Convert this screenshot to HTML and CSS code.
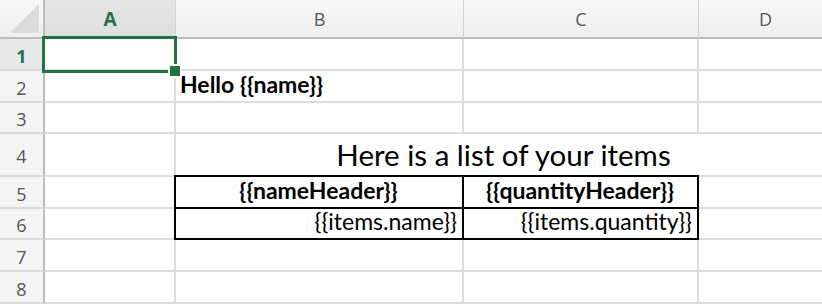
FILE: index.html
```html
<!DOCTYPE html>
<html>
<head>
<meta charset="utf-8">
<link rel="stylesheet" href="styles.css">
</head>
<body>
<div class="sheet">
  <div class="grid">
    <div class="corner"><svg class="corner-tri" width="45" height="39" viewBox="0 0 45 39"><polygon points="10,33 39,4 39,33" fill="#dcdcdc"/></svg></div>
    <div class="colhead selected">A</div>
    <div class="colhead">B</div>
    <div class="colhead">C</div>
    <div class="colhead">D</div>

    <div class="rowhead selected">1</div>
    <div class="cell"></div><div class="cell"></div><div class="cell"></div><div class="cell"></div>

    <div class="rowhead">2</div>
    <div class="cell"></div><div class="cell bold">Hello {{name}}</div><div class="cell"></div><div class="cell"></div>

    <div class="rowhead">3</div>
    <div class="cell"></div><div class="cell"></div><div class="cell"></div><div class="cell"></div>

    <div class="rowhead">4</div>
    <div class="cell"></div>
    <div class="cell title">
      <span>Here is a list of your items</span>
      <span class="table-top"></span>
    </div>

    <div class="rowhead">5</div>
    <div class="cell"></div>
    <div class="cell tb tb-first tb-top bold center">{{nameHeader}}</div>
    <div class="cell tb tb-top bold center">{{quantityHeader}}</div>
    <div class="cell"></div>

    <div class="rowhead">6</div>
    <div class="cell"></div>
    <div class="cell tb tb-first right">{{items.name}}</div>
    <div class="cell tb right">{{items.quantity}}</div>
    <div class="cell"></div>

    <div class="rowhead">7</div>
    <div class="cell"></div><div class="cell"></div><div class="cell"></div><div class="cell"></div>

    <div class="rowhead">8</div>
    <div class="cell"></div><div class="cell"></div><div class="cell"></div><div class="cell"></div>
  </div>
  <div class="selection"><span class="handle"></span></div>
</div>
</body>
</html>
```
FILE: styles.css
```css
* { box-sizing: border-box; }
html, body {
  margin: 0;
  padding: 0;
  background: #ffffff;
  overflow: hidden;
}
.sheet {
  position: relative;
  width: 822px;
  height: 306px;
  overflow: hidden;
}
.grid {
  display: grid;
  grid-template-columns: 45px 131px 288px 235px 134px;
  grid-template-rows: 39px 32px 32px 31px 43px 32px 31px 32px 32px;
  width: 833px;
}
.corner {
  background: linear-gradient(#f7f7f7, #efefef);
  border-right: 2px solid #bdbdbd;
  border-bottom: 2px solid #bdbdbd;
  position: relative;
}
.corner-tri { display: block; }
.colhead {
  background: linear-gradient(#f8f8f8, #efefef);
  border-right: 1px solid #d4d4d4;
  border-bottom: 2px solid #bdbdbd;
  display: flex;
  align-items: center;
  justify-content: center;
  font-family: "Open Sans", "Liberation Sans", sans-serif;
  font-size: 18px;
  color: #555555;
  padding-top: 1px;
}
.colhead.selected {
  background: linear-gradient(#e6e6e6, #dedede);
  color: #217346;
  font-weight: 700;
  font-size: 19px;
}
.rowhead {
  background: #f4f4f4;
  border-right: 2px solid #bdbdbd;
  border-bottom: 2px solid #dadada;
  display: flex;
  align-items: center;
  justify-content: center;
  font-family: "Open Sans", "Liberation Sans", sans-serif;
  font-size: 18px;
  color: #555555;
  padding-top: 3px;
}
.rowhead.selected {
  background: #e8e8e8;
  color: #217346;
  font-weight: 700;
}
.cell {
  border-right: 2px solid #dcdcdc;
  border-bottom: 2px solid #dcdcdc;
  display: flex;
  align-items: flex-end;
  padding: 0 5px 5px 4px;
  font-family: Lato, "Liberation Sans", sans-serif;
  font-size: 23px;
  line-height: 1;
  color: #000;
  white-space: nowrap;
}
.bold { font-weight: 700; }
.center { justify-content: center; }
.right { justify-content: flex-end; }
.title {
  grid-column: span 3;
  justify-content: center;
  font-size: 29.5px;
  padding-bottom: 6px;
  padding-left: 0;
  padding-right: 0;
  position: relative;
}
.table-top {
  position: absolute;
  left: -2px;
  bottom: -2px;
  width: 525px;
  height: 2px;
  background: #000;
}
.tb {
  border-right-color: #000;
  border-bottom-color: #000;
}
.tb-first { box-shadow: -2px 0 0 #000; }
.tb-top { box-shadow: 0 -2px 0 #000; }
.tb-first.tb-top { box-shadow: -2px 0 0 #000, 0 -2px 0 #000, -2px -2px 0 #000; }
.selection {
  position: absolute;
  left: 42px;
  top: 36px;
  width: 135px;
  height: 37px;
  border: 3px solid #217346;
}
.handle {
  position: absolute;
  right: -8px;
  bottom: -8px;
  width: 14px;
  height: 14px;
  background: #217346;
  border: 2px solid #ffffff;
}
```
